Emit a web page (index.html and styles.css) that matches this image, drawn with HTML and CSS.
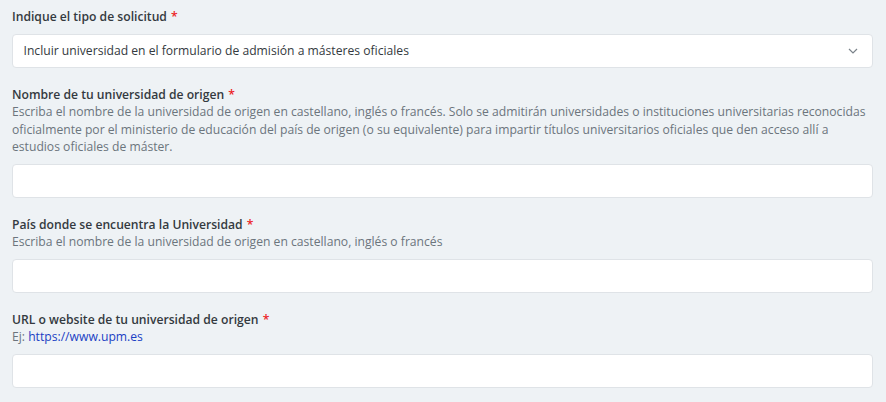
FILE: index.html
```html
<!DOCTYPE html>
<html lang="es">
<head>
<meta charset="utf-8">
<title>Solicitud</title>
<link rel="stylesheet" href="styles.css">
</head>
<body>
<form class="form">
  <div class="field">
    <label class="label">Indique el tipo de solicitud <span class="req">*</span></label>
    <div class="select">
      <span class="select-value">Incluir universidad en el formulario de admisión a másteres oficiales</span>
      <svg class="chevron" width="10" height="6" viewBox="0 0 10 6"><path d="M1 1l4 4 4-4" fill="none" stroke="#7b838a" stroke-width="1.2"/></svg>
    </div>
  </div>
  <div class="field">
    <label class="label">Nombre de tu universidad de origen <span class="req">*</span></label>
    <p class="help">Escriba el nombre de la universidad de origen en castellano, inglés o francés. Solo se admitirán universidades o instituciones universitarias reconocidas oficialmente por el ministerio de educación del país de origen (o su equivalente) para impartir títulos universitarios oficiales que den acceso allí a estudios oficiales de máster.</p>
    <div class="input"></div>
  </div>
  <div class="field">
    <label class="label">País donde se encuentra la Universidad <span class="req">*</span></label>
    <p class="help">Escriba el nombre de la universidad de origen en castellano, inglés o francés</p>
    <div class="input"></div>
  </div>
  <div class="field">
    <label class="label">URL o website de tu universidad de origen <span class="req">*</span></label>
    <p class="help">Ej: <a class="link" href="#">https://www.upm.es</a></p>
    <div class="input"></div>
  </div>
</form>
</body>
</html>
```
FILE: styles.css
```css
html, body {
  margin: 0;
  background: #eef2f5;
}
body {
  font-family: "Open Sans", "Liberation Sans", sans-serif;
  font-size: 12.15px;
  line-height: 17.5px;
  color: #333a40;
}
.form {
  padding: 8px 13px 0 12px;
}
.field {
  display: flex;
  flex-direction: column;
  margin-bottom: 18px;
}
.label {
  font-weight: 600;
  color: #343a40;
}
.req {
  color: #ec1c24;
  margin-left: 1px;
}
.help {
  margin: 0;
  color: #6c757d;
}
.link {
  color: #1b3fc4;
  text-decoration: none;
}
.select, .input {
  margin-top: 8px;
  margin-left: -0.5px;
  height: 34px;
  box-sizing: border-box;
  background: #fff;
  border: 1px solid #dfe3e7;
  border-radius: 4px;
}
.select {
  display: flex;
  align-items: center;
  justify-content: space-between;
  padding: 0 14px 0 11px;
  color: #343a40;
}
.chevron {
  display: block;
}
```
